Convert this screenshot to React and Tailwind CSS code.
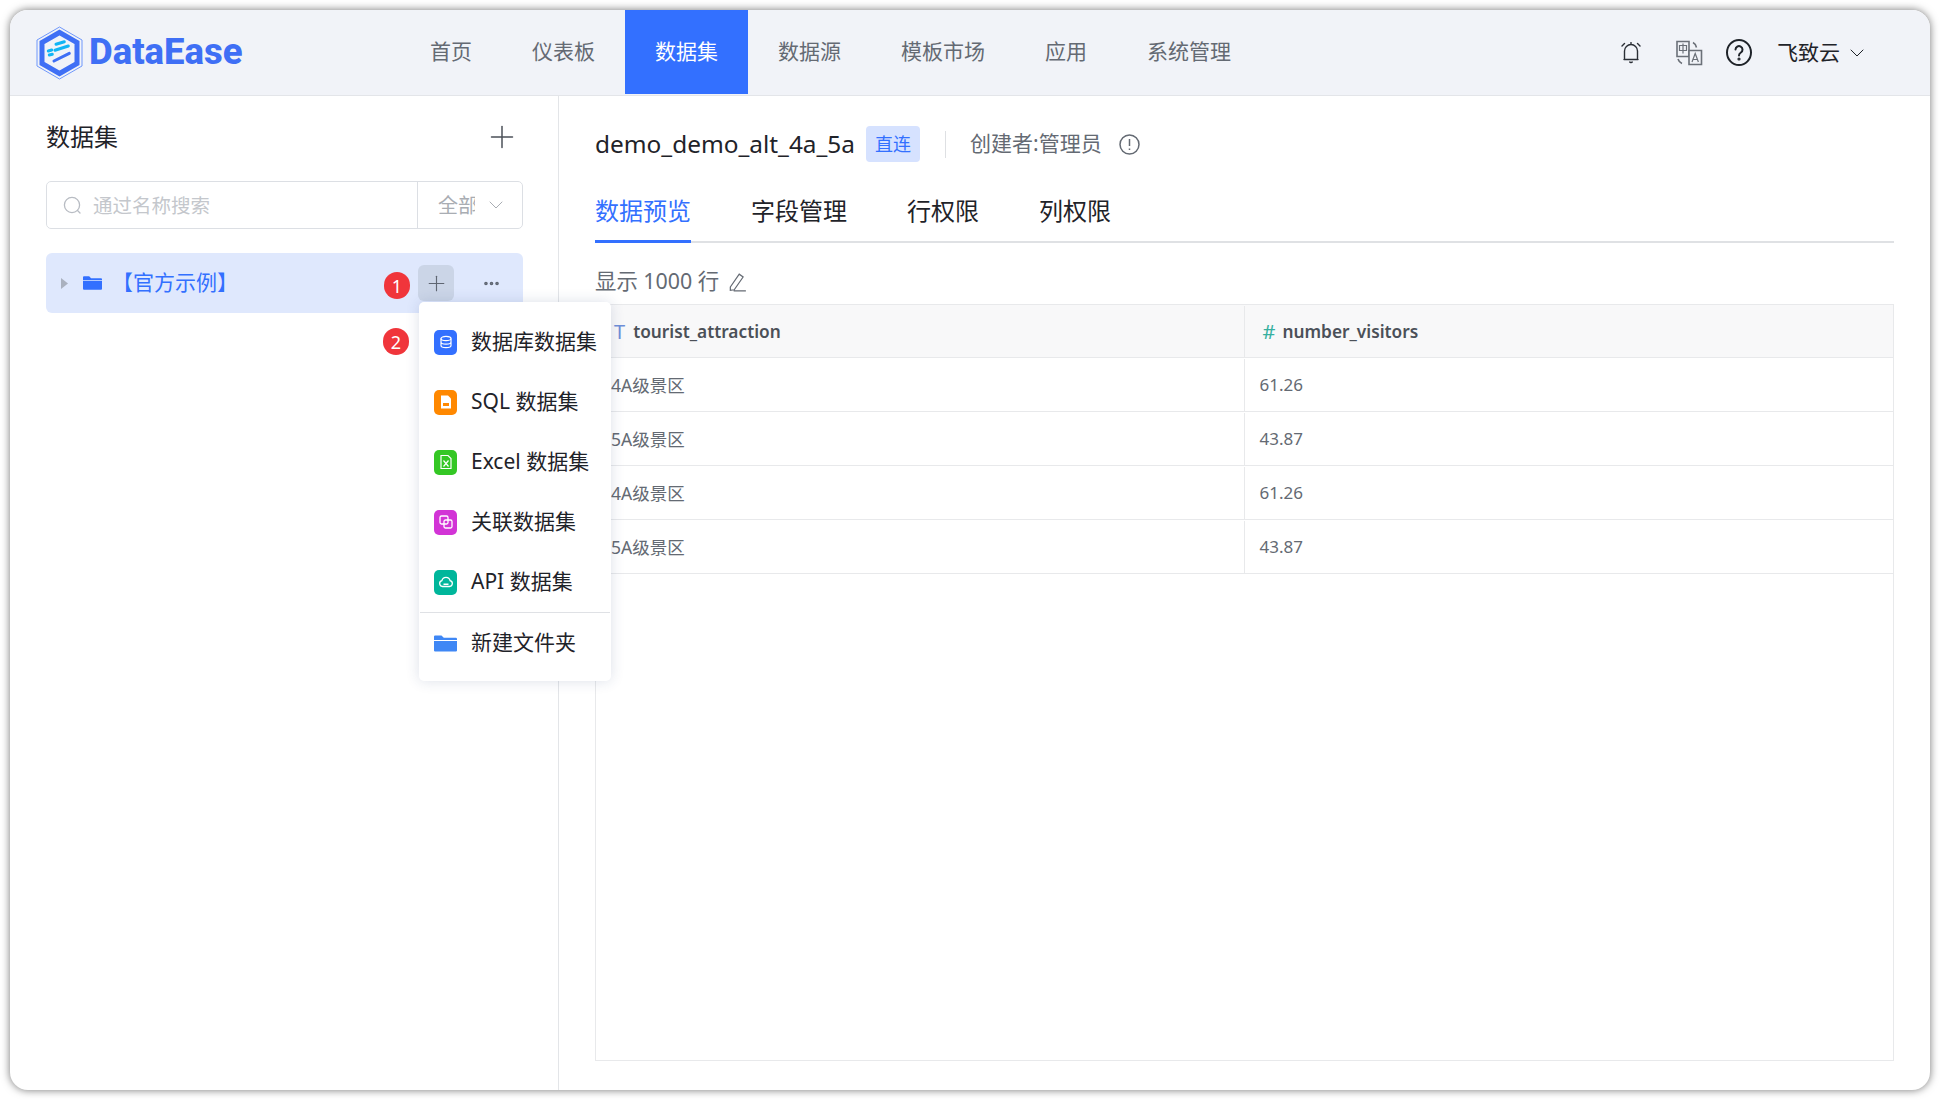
import { Plus, ChevronDown, Ellipsis } from "lucide-react";

const font = "font-['Noto_Sans','Noto_Sans_CJK_SC',sans-serif]";

const navItems = ["首页", "仪表板", "数据集", "数据源", "模板市场", "应用", "系统管理"];
const tabs = ["数据预览", "字段管理", "行权限", "列权限"];
const rows = [
    ["4A级景区", "61.26"],
    ["5A级景区", "43.87"],
    ["4A级景区", "61.26"],
    ["5A级景区", "43.87"],
];

function Logo() {
    return (
        <div className="flex items-center">
            <svg width="48" height="54" viewBox="0 0 48 54" fill="none">
                <path d="M23.5 1 46 14v26L23.5 53 1 40V14Z" stroke="#6f97fb" strokeWidth="1" />
                <path d="M23.5 6.5 41 16.5v21L23.5 47.5 6 37.5v-21Z" stroke="#3f6ff5" strokeWidth="5" />
                <path d="M20 18.3l8.3-2.6M12.3 25l3.4-1M19 24.3 32.3 20M13.3 29l3-.7" stroke="#12b5f5" strokeWidth="3" strokeLinecap="round" />
                <path d="M18 35l15.3-7.7" stroke="#3f6ff5" strokeWidth="3" strokeLinecap="round" />
            </svg>
            <span className="ml-[5px] font-['Roboto',sans-serif] text-[36.5px] leading-none font-extrabold text-[#3f6ff5]">
                DataEase
            </span>
        </div>
    );
}

function BellIcon() {
    return (
        <svg width="20" height="22" viewBox="0 0 20 22" fill="none" stroke="#2b2f36" strokeWidth="1.4">
            <path d="M3.500 17.500V9a6.500 6.500 0 0 1 13 0v8.500M3 17.500h14" strokeLinecap="round" />
            <path d="M8.500 19.500a1.600 1.600 0 0 0 3 0" />
            <path d="M1 4 3.500 1.500M19 4 16.500 1.500M10 .5v1" strokeLinecap="round" />
        </svg>
    );
}

function TranslateIcon() {
    return (
        <svg width="28" height="26" viewBox="0 0 28 26" fill="none" stroke="#6b7078" strokeWidth="1.6">
            <path d="M2 1.500h12v15H2Z" />
            <path d="M4.500 5.500h7v5h-7ZM8 3.500v10" strokeWidth="1.2" />
            <path d="M14 10.500h12.500v14H14Z" fill="#f1f3f8" />
            <path d="m17 22 3.200-8.500 3.200 8.500M18 19.500h4.500" strokeWidth="1.2" />
            <path d="M18 2.500a7 7 0 0 1 3.500 5M3 19a7 7 0 0 0 4 4.500" />
        </svg>
    );
}

function HelpIcon() {
    return (
        <svg width="26" height="27" viewBox="0 0 26 27" fill="none" stroke="#1f2329" strokeWidth="2">
            <ellipse cx="13" cy="13.500" rx="12" ry="12.500" />
            <path d="M9.500 10.500a3.500 3.500 0 1 1 5.400 3c-1.200.8-1.900 1.400-1.900 3" strokeLinecap="round" />
            <circle cx="13" cy="20" r="0.6" fill="#1f2329" />
        </svg>
    );
}

function SearchIcon() {
    return (
        <svg width="19" height="19" viewBox="0 0 19 19" fill="none" stroke="#b8bcc3" strokeWidth="1.3">
            <circle cx="9" cy="9" r="7.600" />
            <path d="m14.500 14.500 2.500 2.500" strokeLinecap="round" />
        </svg>
    );
}

function FolderIcon({ w = 20, h = 14, color = "#3370ff" }) {
    return (
        <svg width={w} height={h} viewBox="0 0 20 14" fill={color}>
            <path d="M0 1a1 1 0 0 1 1-1h5.500l2 2H19a1 1 0 0 1 1 1v1H0Z" />
            <path d="M0 4.800h20V13a1 1 0 0 1-1 1H1a1 1 0 0 1-1-1Z" />
        </svg>
    );
}

function Badge({ n, className }) {
    return (
        <div className={"absolute flex h-[27px] w-[26px] items-center justify-center rounded-full bg-[#f0353b] text-[18px] leading-none text-white " + className}>
            {n}
        </div>
    );
}

const menuItems = [
    {
        label: "数据库数据集",
        bg: "bg-[#3370ff]",
        icon: (
            <g fill="none" stroke="#fff" strokeWidth="1.2">
                <ellipse cx="8" cy="4.500" rx="5" ry="2.200" />
                <path d="M3 4.500v7c0 1.200 2.200 2.200 5 2.200s5-1 5-2.200v-7M3 8c0 1.200 2.200 2.200 5 2.200S13 9.200 13 8" />
            </g>
        ),
    },
    {
        label: "SQL 数据集",
        bg: "bg-[#ff8800]",
        icon: (
            <g>
                <path d="M3 1.500h7l3 3v10H3Z" fill="#fff" />
                <path d="M5 9h6v3H5Z" fill="#ff8800" />
            </g>
        ),
    },
    {
        label: "Excel 数据集",
        bg: "bg-[#34c724]",
        icon: (
            <g fill="none" stroke="#fff" strokeWidth="1.2">
                <path d="M3 1.500h7l3 3v10H3Z" />
                <path d="m5.500 6.500 5 6M10.500 6.500l-5 6" />
            </g>
        ),
    },
    {
        label: "关联数据集",
        bg: "bg-[#d234d6]",
        icon: (
            <g fill="none" stroke="#fff" strokeWidth="1.3">
                <rect x="2" y="2" width="8" height="8" rx="1.500" />
                <rect x="6" y="6" width="8" height="8" rx="1.500" />
            </g>
        ),
    },
    {
        label: "API 数据集",
        bg: "bg-[#00b69b]",
        icon: (
            <g>
                <path d="M4.500 12.500a3 3 0 0 1-.6-5.900 4.200 4.200 0 0 1 8.200 0 3 3 0 0 1-.6 5.900Z" fill="none" stroke="#fff" strokeWidth="1.3" />
                <path d="M5.500 9.500h5v1.500h-5Z" fill="#fff" />
            </g>
        ),
    },
];

function NewMenu() {
    return (
        <div className="absolute left-[409px] top-[292px] z-20 w-[192px] rounded-[5px] bg-white pt-[10px] pb-[8px] shadow-[0_0_14px_rgba(40,60,120,0.16)]">
            {menuItems.map((item) => (
                <div key={item.label} className="flex h-[60px] items-center pl-[15px]">
                    <div className={"flex h-[25px] w-[23px] items-center justify-center rounded-[5px] " + item.bg}>
                        <svg width="16" height="16" viewBox="0 0 16 16">{item.icon}</svg>
                    </div>
                    <span className="ml-[14px] text-[21px] text-[#1f2329]">{item.label}</span>
                </div>
            ))}
            <div className="mx-[1px] h-[1px] bg-[#dfe1e5]" />
            <div className="flex h-[60px] items-center pl-[15px]">
                <FolderIcon w={23} h={17} color="#3f87f5" />
                <span className="ml-[14px] text-[21px] text-[#1f2329]">新建文件夹</span>
            </div>
        </div>
    );
}

function Sidebar() {
    return (
        <aside className="w-[549px] shrink-0 border-r border-[#e3e5e8] pt-[21px] pr-[35px] pl-[36px]">
            <div className="flex h-[40px] items-center justify-between">
                <span className="text-[24px] text-[#1f2329]">数据集</span>
                <Plus size={36} strokeWidth={1} className="mr-[3px] text-[#4b5058]" />
            </div>
            <div className="mt-[24px] flex h-[48px] items-center rounded-[5px] border border-[#dcdfe4]">
                <span className="ml-[16px] flex"><SearchIcon /></span>
                <input
                    placeholder="通过名称搜索"
                    className="ml-[11px] w-[324px] shrink-0 bg-transparent pt-[2px] text-[19.5px] outline-none placeholder:text-[#c4c7cc]"
                />
                <div className="flex h-full flex-1 items-center border-l border-[#dcdfe4] pl-[20px]">
                    <span className="w-[37px] overflow-hidden pt-[2px] text-[20px] whitespace-nowrap text-[#a9adb3]">全部</span>
                    <ChevronDown size={24} strokeWidth={1} className="ml-[9px] text-[#a9adb3]" />
                </div>
            </div>
            <div className="mt-[24px] flex h-[60px] items-center rounded-[6px] bg-[#dfe8fd] pl-[15px]">
                <svg width="7" height="11" viewBox="0 0 7 11" fill="#aab1bf">
                    <path d="M0 0l7 5.500L0 11Z" />
                </svg>
                <span className="ml-[15px] flex"><FolderIcon w={19} h={14} /></span>
                <span className="ml-[10px] text-[21px] text-[#3370ff]">【官方示例】</span>
                <div className="ml-auto mr-[22px] flex h-[36px] items-center">
                    <div className="flex h-[36px] w-[36px] items-center justify-center rounded-[6px] bg-[#cbd5e7]">
                        <Plus size={25} strokeWidth={1.1} className="text-[#5f6672]" />
                    </div>
                    <Ellipsis size={19} strokeWidth={2.6} className="ml-[28px] text-[#5f6672]" />
                </div>
            </div>
        </aside>
    );
}

function DataTable() {
    return (
        <div className="mb-[29px] flex-1 border border-[#e8e9eb]">
            <div className="grid grid-cols-2 h-[53px] border-b border-[#e8e9eb] bg-[#f8f8f9] pt-[1px] text-[17.3px] font-semibold text-[#4b5058]">
                <div className="flex items-center border-r border-[#e8e9eb] pl-[18px]">
                    <span className="mr-[8px] text-[20px] font-normal text-[#6f8fd8]">T</span>
                    tourist_attraction
                </div>
                <div className="flex items-center pl-[18px]">
                    <span className="mr-[7px] text-[20px] font-normal text-[#37b0a0]">#</span>
                    number_visitors
                </div>
            </div>
            {rows.map((row, i) => (
                <div key={i} className="grid grid-cols-2 h-[54px] border-b border-[#e8e9eb] pt-[1px] text-[17px] text-[#646a73]">
                    <div className="flex items-center border-r border-[#e8e9eb] pl-[15px] text-[17.5px]">{row[0]}</div>
                    <div className="flex items-center pl-[15px]">{row[1]}</div>
                </div>
            ))}
        </div>
    );
}

function Main() {
    return (
        <main className="flex min-w-0 flex-1 flex-col pt-[30px] pr-[36px] pl-[36px]">
            <div className="flex h-[36px] items-center">
                <span className="text-[24.4px] text-[#1f2329]">demo_demo_alt_4a_5a</span>
                <span className="ml-[11px] flex h-[36px] w-[54px] items-center justify-center rounded-[4px] bg-[#d6e2ff] text-[18px] text-[#3370ff]">
                    直连
                </span>
                <span className="ml-[25px] h-[27px] w-[1px] bg-[#dee0e3]" />
                <span className="ml-[24px] text-[21px] text-[#646a73]">创建者:管理员</span>
                <svg className="ml-[17px]" width="21" height="21" viewBox="0 0 21 21" fill="none" stroke="#646a73" strokeWidth="1.5">
                    <circle cx="10.500" cy="10.500" r="9.500" />
                    <path d="M10.500 5v7M10.500 14.500v1.500" />
                </svg>
            </div>
            <div className="mt-[16px] flex h-[65px] gap-[60px] border-b-[2px] border-[#dfe1e4]">
                {tabs.map((tab, i) => (
                    <div
                        key={tab}
                        className={
                            "-mb-[2px] flex items-center border-y-[3px] border-t-transparent text-[24px] " +
                            (i === 0 ? "border-b-[#3370ff] text-[#3370ff]" : "border-b-transparent text-[#1f2329]")
                        }
                    >
                        {tab}
                    </div>
                ))}
            </div>
            <div className="flex h-[61px] items-end pb-[7px] text-[21.4px] text-[#646a73]">
                <span>显示 1000 行</span>
                <svg className="mb-[5px] ml-[8px]" width="20" height="20" viewBox="0 0 18 18" fill="none" stroke="#646a73" strokeWidth="1.1">
                    <path d="M3 13.500 11 2l3.500 2.500L6.500 16 3 16.500ZM6 17h11" />
                </svg>
            </div>
            <DataTable />
        </main>
    );
}

export default function App() {
    return (
        <div className={"h-[1100px] w-full bg-white p-[10px] " + font}>
            <div className="relative flex h-[1080px] flex-col overflow-hidden rounded-[18px] bg-white shadow-[0_0_9px_rgba(0,0,0,0.55)]">
                <header className="flex h-[86px] shrink-0 border-b border-[#e3e5e9] bg-[#f1f3f8]">
                    <div className="flex w-[390px] items-center pl-[26px]">
                        <Logo />
                    </div>
                    <nav className="flex h-[84px]">
                        {navItems.map((item) => (
                            <div
                                key={item}
                                className={
                                    "flex items-center px-[30px] text-[21px] " +
                                    (item === "数据集" ? "bg-[#3370ff] text-white" : "text-[#646a73]")
                                }
                            >
                                {item}
                            </div>
                        ))}
                    </nav>
                    <div className="ml-auto flex items-center pr-[61px]">
                        <BellIcon />
                        <span className="ml-[34px] flex"><TranslateIcon /></span>
                        <span className="ml-[23px] flex"><HelpIcon /></span>
                        <span className="ml-[25px] text-[21px] text-[#1f2329]">飞致云</span>
                        <ChevronDown size={24} strokeWidth={1} className="ml-[5px] text-[#1f2329]" />
                    </div>
                </header>
                <div className="flex min-h-0 flex-1">
                    <Sidebar />
                    <Main />
                </div>
                <Badge n="1" className="left-[374px] top-[262px]" />
                <Badge n="2" className="left-[373px] top-[318px]" />
                <NewMenu />
            </div>
        </div>
    );
}
